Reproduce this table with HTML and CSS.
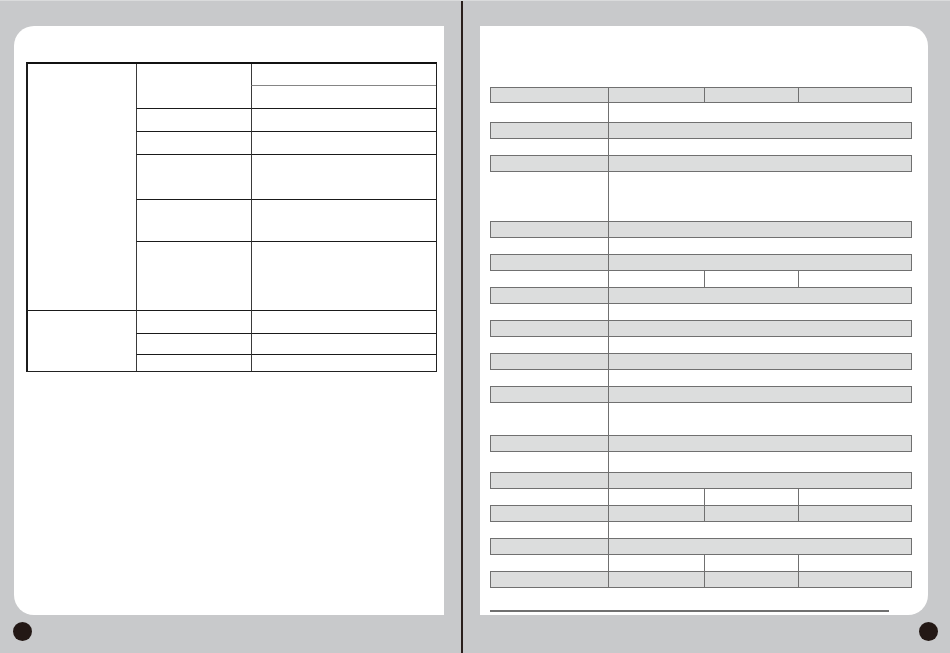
FILE: index.html
```html
<!DOCTYPE html>
<html lang="en">
<head>
    <meta charset="UTF-8">
    <meta name="viewport" content="width=device-width, initial-scale=1.0">
    <link rel="stylesheet" href="styles.css">
</head>
<body>
<div class="spread">
    <div class="page page-left">
        <div class="sheet sheet-left">
            <div class="spec-grid">
                <div class="cell group group-a"></div>
                <div class="cell group group-b"></div>

                <div class="cell item double"></div>
                <div class="cell value"></div>
                <div class="cell value sub"></div>

                <div class="cell item"></div>
                <div class="cell value"></div>
                <div class="cell item"></div>
                <div class="cell value"></div>
                <div class="cell item"></div>
                <div class="cell value"></div>
                <div class="cell item"></div>
                <div class="cell value"></div>
                <div class="cell item"></div>
                <div class="cell value"></div>

                <div class="cell item"></div>
                <div class="cell value"></div>
                <div class="cell item"></div>
                <div class="cell value"></div>
                <div class="cell item"></div>
                <div class="cell value"></div>
            </div>
        </div>
        <div class="page-foot">
            <span class="dot dot-left"></span>
        </div>
    </div>

    <div class="gutter"></div>

    <div class="page page-right">
        <div class="sheet sheet-right">
            <div class="bands">
                <div class="band shade head"><span></span><span></span><span></span><span></span></div>
                <div class="band plain loose"><span></span><span class="wide"></span></div>
                <div class="band shade"><span></span><span class="wide"></span></div>
                <div class="band plain"><span></span><span class="wide"></span></div>
                <div class="band shade"><span></span><span class="wide"></span></div>
                <div class="band plain tall"><span></span><span class="wide"></span></div>
                <div class="band shade"><span></span><span class="wide"></span></div>
                <div class="band plain"><span></span><span class="wide"></span></div>
                <div class="band shade"><span></span><span class="wide"></span></div>
                <div class="band plain"><span></span><span></span><span></span><span></span></div>
                <div class="band shade"><span></span><span class="wide"></span></div>
                <div class="band plain"><span></span><span class="wide"></span></div>
                <div class="band shade"><span></span><span class="wide"></span></div>
                <div class="band plain"><span></span><span class="wide"></span></div>
                <div class="band shade"><span></span><span class="wide"></span></div>
                <div class="band plain"><span></span><span class="wide"></span></div>
                <div class="band shade"><span></span><span class="wide"></span></div>
                <div class="band plain mid"><span></span><span class="wide"></span></div>
                <div class="band shade"><span></span><span class="wide"></span></div>
                <div class="band plain roomy"><span></span><span class="wide"></span></div>
                <div class="band shade"><span></span><span class="wide"></span></div>
                <div class="band plain"><span></span><span></span><span></span><span></span></div>
                <div class="band shade"><span></span><span></span><span></span><span></span></div>
                <div class="band plain"><span></span><span class="wide"></span></div>
                <div class="band shade"><span></span><span class="wide"></span></div>
                <div class="band plain"><span></span><span></span><span></span><span></span></div>
                <div class="band shade"><span></span><span></span><span></span><span></span></div>
            </div>
            <div class="rule"></div>
        </div>
        <div class="page-foot foot-right">
            <span class="dot dot-right"></span>
        </div>
    </div>
</div>
</body>
</html>
```

FILE: styles.css
```css
* {
    box-sizing: border-box;
}

html, body {
    margin: 0;
    padding: 0;
}

body {
    font-family: "Liberation Sans", Arial, sans-serif;
    background: #c8c9cb;
}

.spread {
    display: flex;
    width: 950px;
    height: 653px;
    background: #c8c9cb;
    border-top: 1px solid #dadbdc;
}

.page {
    display: flex;
    flex-direction: column;
    padding-top: 25px;
}

.page-left {
    width: 461px;
    padding-left: 14px;
    padding-right: 17px;
}

.page-right {
    width: 487px;
    padding-left: 17px;
    padding-right: 22px;
}

.gutter {
    width: 2px;
    background: #2a1f1c;
}

.sheet {
    height: 589px;
    background: #ffffff;
}

.sheet-left {
    border-radius: 20px 0 0 20px;
    padding: 36px 0 0 12px;
}

.sheet-right {
    border-radius: 0 20px 20px 0;
    padding: 61px 0 0 10px;
}

.page-foot {
    display: flex;
    margin-top: 7px;
}

.foot-right {
    justify-content: flex-end;
}

.dot {
    width: 19px;
    height: 19px;
    border-radius: 50%;
    background: #231815;
}

.dot-left {
    margin-left: -1px;
}

.dot-right {
    margin-right: -10px;
}

/* left page table */
.spec-grid {
    display: grid;
    width: 411px;
    grid-template-columns: 108px 115px 185px;
    grid-template-rows: 21px 23px 23px 23px 45px 42px 69px 23px 21px 17px;
    border-top: 2px solid #111;
    border-left: 2px solid #1c1c1c;
    border-right: 1px solid #222;
    border-bottom: 1px solid #222;
}

.cell {
    border-top: 1px solid #1a1a1a;
    border-left: 1px solid #3a3a3a;
}

.group {
    grid-column: 1;
    border-left: none;
}

.group-a {
    grid-row: 1 / 8;
    border-top: none;
}

.group-b {
    grid-row: 8 / 11;
}

.item {
    grid-column: 2;
}

.value {
    grid-column: 3;
}

.double {
    grid-row: span 2;
    border-top: none;
}

.double + .value {
    border-top: none;
}

.value.sub {
    border-top-color: #858585;
}

/* right page table */
.bands {
    width: 422px;
}

.band {
    display: grid;
    grid-template-columns: 117px 96px 94px 113px;
    height: 16px;
    border-left: 1px solid transparent;
    border-right: 1px solid transparent;
}

.band span + span {
    border-left: 1px solid #707070;
}

.band .wide {
    grid-column: 2 / -1;
}

.shade {
    height: 17px;
    background: #dcdddd;
    border: 1px solid #707070;
}

.shade.head {
    height: 16px;
}

.plain.loose {
    height: 19px;
}

.plain.tall {
    height: 49px;
}

.plain.mid {
    height: 32px;
}

.plain.roomy {
    height: 20px;
}

.rule {
    width: 399px;
    height: 2px;
    margin-top: 22px;
    background: #707070;
}
```
